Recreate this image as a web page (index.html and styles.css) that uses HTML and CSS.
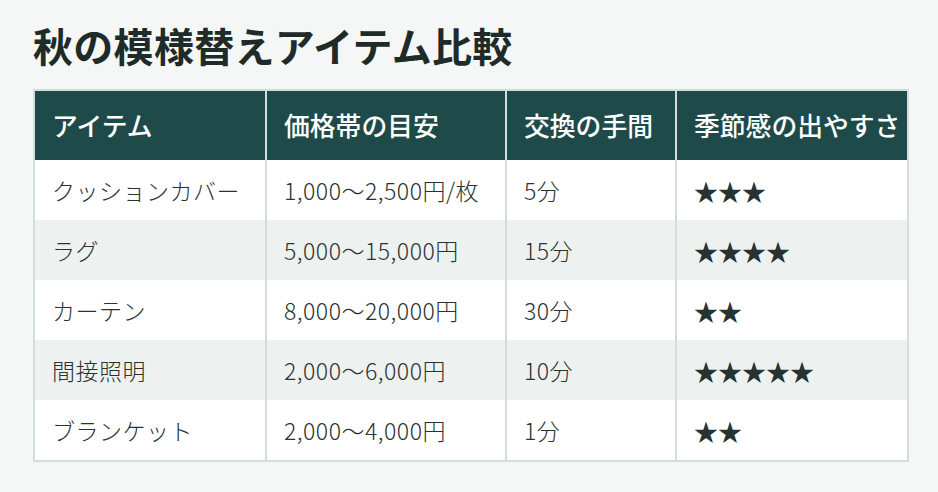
FILE: index.html
```html
<!DOCTYPE html>
<html lang="ja">
<head>
<meta charset="utf-8">
<link rel="stylesheet" href="styles.css">
</head>
<body>
<main class="page">
  <h1 class="title">秋の模様替えアイテム比較</h1>
  <table class="compare">
    <colgroup>
      <col class="c1"><col class="c2"><col class="c3"><col class="c4">
    </colgroup>
    <thead>
      <tr><th>アイテム</th><th>価格帯の目安</th><th>交換の手間</th><th>季節感の出やすさ</th></tr>
    </thead>
    <tbody>
      <tr><td>クッションカバー</td><td>1,000〜2,500円/枚</td><td>5分</td><td class="stars">★★★</td></tr>
      <tr><td>ラグ</td><td>5,000〜15,000円</td><td>15分</td><td class="stars">★★★★</td></tr>
      <tr><td>カーテン</td><td>8,000〜20,000円</td><td>30分</td><td class="stars">★★</td></tr>
      <tr><td>間接照明</td><td>2,000〜6,000円</td><td>10分</td><td class="stars">★★★★★</td></tr>
      <tr><td>ブランケット</td><td>2,000〜4,000円</td><td>1分</td><td class="stars">★★</td></tr>
    </tbody>
  </table>
</main>
</body>
</html>
```
FILE: styles.css
```css
html, body {
  margin: 0;
  padding: 0;
  background: #f5f7f6;
}
body {
  font-family: "Noto Sans CJK JP", "Noto Sans", sans-serif;
  color: #2b3230;
}
.page {
  padding: 21px 31px 0 33px;
}
.title {
  margin: 0 0 20px;
  font-size: 40px;
  line-height: 48px;
  font-weight: 700;
  letter-spacing: 0.3px;
  color: #1f2b28;
}
.compare {
  border-collapse: collapse;
  table-layout: fixed;
  width: 874px;
  border: 2px solid #d3dedb;
  background: #ffffff;
}
.c1 { width: 232px; }
.c2 { width: 240px; }
.c3 { width: 170px; }
.c4 { width: 232px; }
.compare th,
.compare td {
  border-left: 2px solid #d3dedb;
  border-right: 2px solid #d3dedb;
  text-align: left;
  padding: 0 0 0 17px;
  white-space: nowrap;
  overflow: visible;
}
.compare th {
  background: #1f4a4a;
  color: #ffffff;
  font-size: 25.8px;
  font-weight: 500;
  height: 67px;
  padding-bottom: 2px;
}
.compare td {
  font-size: 23px;
  font-weight: 300;
  letter-spacing: 0.5px;
  height: 60px;
}
.compare tbody tr:nth-child(even) td {
  background: #edf2f0;
}
.compare td.stars {
  color: #263330;
  font-weight: 400;
  letter-spacing: 0;
  font-size: 24px;
}
```
